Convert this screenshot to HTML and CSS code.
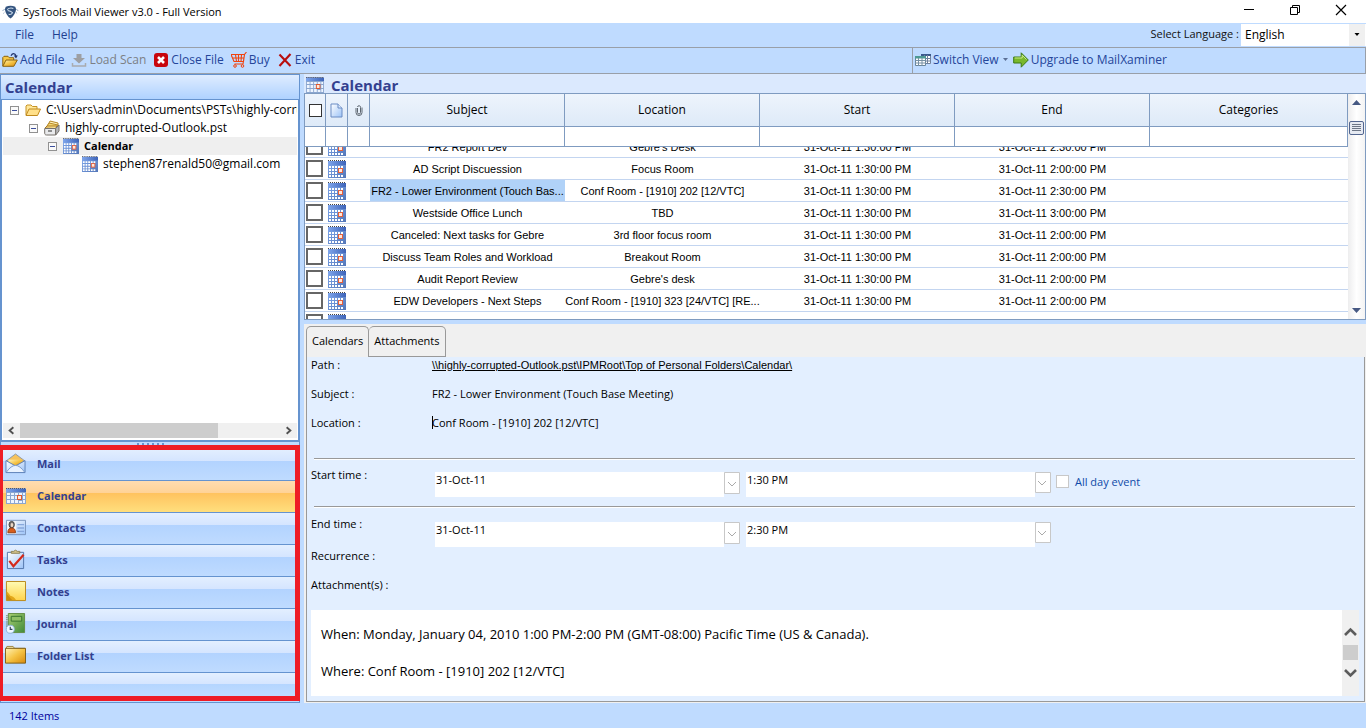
FILE: index.html
```html
<!DOCTYPE html>
<html lang="en">
<head>
<meta charset="utf-8">
<title>SysTools Mail Viewer v3.0 - Full Version</title>
<link rel="stylesheet" href="styles.css">
</head>
<body>
<svg class="sprite" aria-hidden="true">
  <defs>
    <linearGradient id="g-sky" x1="0" y1="0" x2="1" y2="1"><stop offset="0" stop-color="#fff"/><stop offset="1" stop-color="#9cc3f7"/></linearGradient>
    <linearGradient id="g-cal" x1="0" y1="0" x2="1" y2="0"><stop offset="0" stop-color="#7fa6ec"/><stop offset="1" stop-color="#3d63b8"/></linearGradient>
    <linearGradient id="g-calbody" x1="0" y1="0" x2="1" y2="1"><stop offset="0" stop-color="#7fa8ee"/><stop offset="1" stop-color="#5477b8"/></linearGradient>
    <linearGradient id="g-gold" x1="0" y1="0" x2="1" y2="1"><stop offset="0" stop-color="#fff3b8"/><stop offset=".5" stop-color="#f5c344"/><stop offset="1" stop-color="#d98a0c"/></linearGradient>
    <linearGradient id="g-note" x1="0" y1="0" x2="0" y2="1"><stop offset="0" stop-color="#fffbb4"/><stop offset="1" stop-color="#ffd34a"/></linearGradient>
    <linearGradient id="g-green" x1="0" y1="0" x2="1" y2="1"><stop offset="0" stop-color="#a9cf72"/><stop offset="1" stop-color="#3f8a3a"/></linearGradient>
  </defs>
  <symbol id="i-cal" viewBox="0 0 18 18" preserveAspectRatio="none">
    <rect x="0" y="1" width="18" height="17" fill="url(#g-calbody)"/>
    <rect x="0" y="1" width="18" height="4" fill="url(#g-cal)"/>
    <path d="M0 .5h18" stroke="#444" stroke-dasharray="1 1"/>
    <path d="M1 6h2v2H1zM4 6h2v2H4zM7 6h2v2H7zM10 6h2v2h-2zM13 6h2v2h-2zM1 9h2v2H1zM4 9h2v2H4zM7 9h2v2H7zM1 12h2v2H1zM4 12h2v2H4zM7 12h2v2H7zM1 15h2v2H1zM4 15h2v2H4zM7 15h2v2H7zM10 15h2v2h-2zM13 15h2v2h-2z" fill="#fff"/>
    <rect x="10.500" y="8.500" width="4" height="4" fill="#ffe9dc" stroke="#e8603a"/>
  </symbol>
  <symbol id="i-callight" viewBox="0 0 20 16" preserveAspectRatio="none">
    <rect x="0" y="0" width="20" height="16" fill="#8ba6cf"/>
    <rect x="0" y="1" width="20" height="3" fill="url(#g-cal)"/>
    <path d="M0 .5h20" stroke="#556" stroke-dasharray="1 1"/>
    <path d="M1 5h3v2H1zM5 5h3v2H5zM9 5h3v2H9zM13 5h3v2h-3zM17 5h2v2h-2zM1 8h3v3H1zM5 8h3v3H5zM9 8h2v3H9zM17 8h2v3h-2zM1 12h3v3H1zM5 12h3v3H5zM9 12h3v3H9zM13 13h3v2h-3zM17 12h2v3h-2z" fill="#eef5ff"/>
    <rect x="11.500" y="7.500" width="4" height="4" fill="#ffe9dc" stroke="#e0592f"/>
  </symbol>
  <symbol id="i-folder" viewBox="0 0 16 16">
    <path d="M1 13V4l1-1h4l1.500 1.500H12V7" fill="#ffe79a" stroke="#c79325"/>
    <path d="M1 13.500L4 7h11.500l-3 6.500z" fill="#ffe08a" stroke="#c08a1e"/>
  </symbol>
  <symbol id="i-addfile" viewBox="0 0 16 16">
    <path d="M.8 14V5.500L2 4.300h4l1.200 1.400h4.500V8" fill="#f6c948" stroke="#8a6210"/>
    <path d="M.8 14.300L4 8h11.300l-3.500 6.300z" fill="url(#g-gold)" stroke="#8a6210"/>
    <path d="M9 3.800C10.500 1 13 1 14 4" fill="none" stroke="#23366e" stroke-width="1.300"/><path d="M11.800 3.500h4L14 6.500z" fill="#23366e"/>
  </symbol>
  <symbol id="i-pst" viewBox="0 0 16 16">
    <path d="M4 5l2-4 8 2v6l-2 4" fill="#fff3bb" stroke="#b5872a"/>
    <path d="M3 6l2-3 9 2-2 4" fill="#f7d873" stroke="#b5872a"/>
    <path d="M1 8l2-2h10l-1.500 2.500z" fill="#ffe79a" stroke="#a8781d"/>
    <path d="M.7 8.500h11V15H2.500C1 15 .7 14 .7 13z" fill="#e9eaec" stroke="#75706a"/><path d="M11.700 8.500L15 5v6l-3.300 4z" fill="#b4b5b8" stroke="#75706a"/>
    <path d="M4 11h4" stroke="#666" stroke-width="1.400"/>
  </symbol>
  <symbol id="i-box" viewBox="0 0 9 9"><rect x=".5" y=".5" width="8" height="8" fill="#fafafa" stroke="#919191"/><path d="M2 4.500h5" stroke="#3c4f9c"/></symbol>
</svg>

<header class="titlebar">
  <svg class="logo" viewBox="0 0 18 16" aria-hidden="true">
    <path d="M4 2.500Q9 .5 14 2.500L15 5q-1 6-6 10Q4 11 3 5z" fill="#34547f"/>
    <path d="M5.500 5.500Q8 3 12 4.200M6 6.500q3 .5 5.500 2.500M7 10.500q3 .5 4-1.500" fill="none" stroke="#cfdeee" stroke-width="1.100"/>
    <path d="M2.500 5L.5 7M2.500 8.500l-1 1M15.500 5l1.700 2M15 8.500l1 1" stroke="#8aa3bf"/>
  </svg>
  <h1 class="titlebar-text">SysTools Mail Viewer v3.0 - Full Version</h1>
  <div class="window-buttons">
    <button type="button" aria-label="Minimize"><svg width="12" height="12" viewBox="0 0 12 12"><path d="M1 5.500h10" stroke="#000"/></svg></button>
    <button type="button" aria-label="Restore"><svg width="12" height="12" viewBox="0 0 12 12"><path d="M1.500 3.500h7v7h-7zM3.500 3V1.500h7v7H9" fill="none" stroke="#000"/></svg></button>
    <button type="button" aria-label="Close"><svg width="12" height="12" viewBox="0 0 12 12"><path d="M1 1l10 10M11 1L1 11" stroke="#000" stroke-width="1.200"/></svg></button>
  </div>
</header>

<nav class="menubar">
  <button type="button">File</button>
  <button type="button">Help</button>
  <label class="language-label" for="language">Select Language :</label>
  <div class="language">
    <select id="language"><option>English</option></select>
    <svg class="language-arrow" viewBox="0 0 16 22" aria-hidden="true"><rect width="16" height="22" fill="#f0f0f0"/><path d="M5.500 9h5L8 12z" fill="#000"/></svg>
  </div>
</nav>

<div class="toolbar">
  <div class="toolbar-main">
    <button type="button"><svg class="icon16" aria-hidden="true"><use href="#i-addfile"/></svg>Add File</button>
    <button type="button" disabled><svg class="icon16" viewBox="0 0 16 16" aria-hidden="true"><path d="M5.500 2h5v4H14l-6 5.500L2 6h3.500z" fill="#9d9fa3"/><path d="M1.500 11v3h13v-3" fill="none" stroke="#a9abaf" stroke-width="1.500"/></svg>Load Scan</button>
    <button type="button"><svg class="icon16" viewBox="0 0 16 16" aria-hidden="true"><rect x="1" y="1" width="14" height="14" rx="3" fill="#c8060e"/><path d="M5 5l6 6M11 5l-6 6" stroke="#fff" stroke-width="2.600"/></svg>Close File</button>
    <button type="button"><svg class="icon16" viewBox="0 0 16 16" aria-hidden="true"><path d="M0 2.500h13.500L12.500 9.500H3zM15.500 0l-2 2.500L12 12H3.500M1.500 6h12M4.500 2.500l1 7M7.500 2.500v7M10.500 2.500l-.5 7" fill="none" stroke="#f0420d" stroke-width="1.100"/><circle cx="4" cy="14" r="1.300" fill="none" stroke="#f0420d"/><circle cx="11.500" cy="14" r="1.300" fill="none" stroke="#f0420d"/></svg>Buy</button>
    <button type="button"><svg class="icon16" viewBox="0 0 16 16" aria-hidden="true"><path d="M2.500 2.500L13.500 14M13.500 2L2.500 14" stroke="#b80d0d" stroke-width="2.100"/></svg>Exit</button>
  </div>
  <div class="toolbar-side">
    <button type="button" class="split"><svg class="icon16" viewBox="0 0 16 16" aria-hidden="true"><path d="M6.500 2.500h9v9h-9z" fill="#fff" stroke="#6f819c"/><path d="M6 2h10v2H6z" fill="#3c5a8c"/><path d="M6 6.500h10M6 9h10M9.500 3v9M12.500 3v9" stroke="#6f819c"/><path d="M.5 4.500h10v9H.5z" fill="#fff" stroke="#66849b"/><path d="M0 4h11v2.500H0z" fill="#4f9a94"/><path d="M0 8.500h11M0 11h11M3.500 6v8M7 6v8" stroke="#7690a4"/></svg>Switch View<svg class="split-arrow" viewBox="0 0 5 3" aria-hidden="true"><path d="M0 0h5L2.500 3z" fill="#5a6f95"/></svg></button>
    <button type="button"><svg class="icon16" viewBox="0 0 16 16" aria-hidden="true"><path d="M.7 5h7.500V.8L15.300 8l-7.100 7.200V11H.7z" fill="#79b82c" stroke="#3a7a16"/><path d="M1.700 6h7.500V3.200L13.500 7.500" fill="none" stroke="#c8ea86"/></svg>Upgrade to MailXaminer</button>
  </div>
</div>

<main class="workspace">
  <aside class="sidebar">
    <h2 class="sidebar-title">Calendar</h2>
    <div class="tree-box">
      <ul class="tree">
        <li><div class="node"><svg class="expander"><use href="#i-box"/></svg><svg class="icon16"><use href="#i-folder"/></svg><span>C:\Users\admin\Documents\PSTs\highly-corrup</span></div>
          <ul>
            <li><div class="node"><svg class="expander"><use href="#i-box"/></svg><svg class="icon16"><use href="#i-pst"/></svg><span>highly-corrupted-Outlook.pst</span></div>
              <ul>
                <li><div class="node node-active"><svg class="expander"><use href="#i-box"/></svg><svg class="icon16"><use href="#i-cal"/></svg><span>Calendar</span></div>
                  <ul>
                    <li><div class="node"><svg class="expander"></svg><svg class="icon16"><use href="#i-cal"/></svg><span>stephen87renald50@gmail.com</span></div></li>
                  </ul>
                </li>
              </ul>
            </li>
          </ul>
        </li>
      </ul>
      <div class="hscroll">
        <svg viewBox="0 0 17 16"><path d="M10.500 4.500L6.500 8l4 3.500" fill="none" stroke="#505050" stroke-width="2"/></svg>
        <div class="hscroll-track"><div class="hscroll-thumb"></div></div>
        <svg viewBox="0 0 17 16"><path d="M6.500 4.500l4 3.500-4 3.500" fill="none" stroke="#505050" stroke-width="2"/></svg>
      </div>
    </div>
    <div class="splitter"><span></span><span></span><span></span><span></span><span></span><span></span></div>
    <nav class="modules">
      <button type="button"><svg viewBox="0 0 22 22"><path d="M1 8.500L11 1l10 7.500z" fill="#f6c25c" stroke="#8b98ab"/><path d="M3.500 7h15v7h-15z" fill="url(#g-gold)"/><path d="M1 8l10 5.500L21 8v12.500H1z" fill="url(#g-sky)" stroke="#5d80b6"/><path d="M1.500 20q5-7 9.500-7t9.500 7" fill="#e8f2ff" stroke="#7d9ccc"/></svg>Mail</button>
      <button type="button" class="selected"><svg viewBox="0 0 21 21"><use href="#i-callight" x="1" y="3" width="20" height="16"/></svg>Calendar</button>
      <button type="button"><svg viewBox="0 0 22 22"><path d="M1.500 3.500h20v15h-20z" fill="url(#g-sky)" stroke="#7b95bd"/><path d="M2.500 4.500h9v13h-9z" fill="#f3f5f8"/><ellipse cx="7" cy="8" rx="2.800" ry="3.400" fill="#77706d" stroke="#444"/><ellipse cx="7.300" cy="8.500" rx="1.400" ry="2.200" fill="#ead7c5"/><path d="M3 16.500q0-5 4-5t4 5z" fill="#d85e1d" stroke="#923a0e"/><path d="M13 8h7M13 11.500h7M13 15h7" stroke="#88a8dc" stroke-width="1.400"/></svg>Contacts</button>
      <button type="button"><svg viewBox="0 0 22 22"><path d="M2.500 3.500h17v17h-17z" fill="url(#g-sky)" stroke="#5274a8"/><path d="M6.500 4.500V2.500h2.500q2-2.500 4 0h2.500v2z" fill="#d3c48d" stroke="#8c8053"/><path d="M4.500 12.500l4.300 5.500L19.500 6" fill="none" stroke="#d42a1b" stroke-width="2.300"/></svg>Tasks</button>
      <button type="button"><svg viewBox="0 0 22 22"><path d="M1.500 .5h20v20h-20z" fill="url(#g-note)" stroke="#b98716"/><path d="M2 11q3 3 3.500 4.500Q9 16 11.500 20H2z" fill="#e3a719"/><path d="M2 14l5.500 6H2z" fill="#c88b10"/></svg>Notes</button>
      <button type="button"><svg viewBox="0 0 22 22"><path d="M3.500 .5h17v20h-17z" fill="url(#g-green)" stroke="#628c42"/><path d="M2 2v15" stroke="#778f76" stroke-width="2" stroke-dasharray="1 1"/><path d="M6.500 3.500h11v5h-11z" fill="#8fbf66" stroke="#37722f"/><circle cx="5.500" cy="17" r="4.200" fill="#eef6ff" stroke="#8db4da"/><path d="M5.500 14.500v2.700h2.300" fill="none" stroke="#345" stroke-width="1.200"/></svg>Journal</button>
      <button type="button"><svg viewBox="0 0 22 22"><path d="M1 4l1-2.500h6.500L10 3.500h11V5" fill="#f7eaae" stroke="#9a8342"/><path d="M.5 3.500h21v15.500H.5z" fill="url(#g-gold)" stroke="#7e5c14"/></svg>Folder List</button>
      <div class="modules-rest"></div>
    </nav>
  </aside>

  <section class="content">
    <h2 class="content-title"><svg viewBox="0 0 18 16"><use href="#i-callight"/></svg>Calendar</h2>
    <div class="grid">
      <div class="grid-tables">
        <table class="grid-head">
          <colgroup><col class="c-check-head"><col class="c-icon"><col class="c-icon"><col class="c-text"><col class="c-text"><col class="c-text"><col class="c-text"><col></colgroup>
          <thead>
            <tr>
              <th><input type="checkbox" aria-label="Select all"></th>
              <th><svg width="13" height="15" viewBox="0 0 13 15"><path d="M1 1h7l4 4v9H1z" fill="url(#g-sky)" stroke="#6b8cc4"/><path d="M8 1v4h4" fill="#dbe8fb" stroke="#6b8cc4"/></svg></th>
              <th><svg width="8" height="11" viewBox="0 0 8 11"><path d="M2.500 3v4.500a1.500 1.500 0 003 0V2.500a1.500 1.500 0 00-3-.5M1 3v4.500a3 3 0 006 0V2.500" fill="none" stroke="#5d6670"/></svg></th>
              <th>Subject</th><th>Location</th><th>Start</th><th>End</th><th>Categories</th>
            </tr>
            <tr class="filters"><td></td><td></td><td></td>
              <td><input type="text" aria-label="Filter subject"></td><td><input type="text" aria-label="Filter location"></td><td><input type="text" aria-label="Filter start"></td><td><input type="text" aria-label="Filter end"></td><td><input type="text" aria-label="Filter categories"></td></tr>
          </thead>
        </table>
        <div class="grid-body" id="grid-body">
          <table>
            <colgroup><col class="c-check"><col class="c-icon"><col class="c-icon"><col class="c-text"><col class="c-text"><col class="c-text"><col class="c-text"><col></colgroup>
            <tbody>
              <tr><td><input type="checkbox" aria-label="Select row"></td><td><svg class="row-icon"><use href="#i-cal"/></svg></td><td></td><td>FR2 Report Dev</td><td>Gebre's Desk</td><td>31-Oct-11 1:30:00 PM</td><td>31-Oct-11 2:30:00 PM</td><td></td></tr>
              <tr><td><input type="checkbox" aria-label="Select row"></td><td><svg class="row-icon"><use href="#i-cal"/></svg></td><td></td><td>AD Script Discuession</td><td>Focus Room</td><td>31-Oct-11 1:30:00 PM</td><td>31-Oct-11 2:00:00 PM</td><td></td></tr>
              <tr><td><input type="checkbox" aria-label="Select row"></td><td><svg class="row-icon"><use href="#i-cal"/></svg></td><td></td><td class="current">FR2 - Lower Environment (Touch Bas...</td><td>Conf Room - [1910] 202 [12/VTC]</td><td>31-Oct-11 1:30:00 PM</td><td>31-Oct-11 2:30:00 PM</td><td></td></tr>
              <tr><td><input type="checkbox" aria-label="Select row"></td><td><svg class="row-icon"><use href="#i-cal"/></svg></td><td></td><td>Westside Office Lunch</td><td>TBD</td><td>31-Oct-11 1:30:00 PM</td><td>31-Oct-11 3:00:00 PM</td><td></td></tr>
              <tr><td><input type="checkbox" aria-label="Select row"></td><td><svg class="row-icon"><use href="#i-cal"/></svg></td><td></td><td>Canceled: Next tasks for Gebre</td><td>3rd floor focus room</td><td>31-Oct-11 1:30:00 PM</td><td>31-Oct-11 2:00:00 PM</td><td></td></tr>
              <tr><td><input type="checkbox" aria-label="Select row"></td><td><svg class="row-icon"><use href="#i-cal"/></svg></td><td></td><td>Discuss Team Roles and Workload</td><td>Breakout Room</td><td>31-Oct-11 1:30:00 PM</td><td>31-Oct-11 2:00:00 PM</td><td></td></tr>
              <tr><td><input type="checkbox" aria-label="Select row"></td><td><svg class="row-icon"><use href="#i-cal"/></svg></td><td></td><td>Audit Report Review</td><td>Gebre's desk</td><td>31-Oct-11 1:30:00 PM</td><td>31-Oct-11 2:00:00 PM</td><td></td></tr>
              <tr><td><input type="checkbox" aria-label="Select row"></td><td><svg class="row-icon"><use href="#i-cal"/></svg></td><td></td><td>EDW Developers - Next Steps</td><td>Conf Room - [1910] 323 [24/VTC] [RE...</td><td>31-Oct-11 1:30:00 PM</td><td>31-Oct-11 2:00:00 PM</td><td></td></tr>
              <tr><td><input type="checkbox" aria-label="Select row"></td><td><svg class="row-icon"><use href="#i-cal"/></svg></td><td></td><td>Canceled: FR2 Developer - Check</td><td>Conf Room - [1910] 202 [12/VTC]</td><td>31-Oct-11 1:30:00 PM</td><td>31-Oct-11 2:30:00 PM</td><td></td></tr>
            </tbody>
          </table>
        </div>
      </div>
      <div class="grid-scroll">
        <svg width="9" height="5" viewBox="0 0 9 5"><path d="M0 5h9L4.500 0z" fill="#475983"/></svg>
        <svg class="grid-thumb" width="15" height="14" viewBox="0 0 15 14"><rect x=".5" y=".5" width="14" height="13" rx="1.500" fill="#e6eaf2" stroke="#53668f"/><path d="M3 3.500h9M3 5.500h9M3 7.500h9M3 9.500h9" stroke="#6d7686"/></svg>
        <svg class="grid-down" width="9" height="5" viewBox="0 0 9 5"><path d="M0 0h9L4.500 5z" fill="#475983"/></svg>
      </div>
    </div>

    <div class="details">
      <div class="tabs" role="tablist">
        <button type="button" role="tab" aria-selected="true">Calendars</button>
        <button type="button" role="tab" aria-selected="false">Attachments</button>
      </div>
      <div class="panel" role="tabpanel">
        <dl class="facts">
          <dt>Path :</dt><dd><a href="#path">\\highly-corrupted-Outlook.pst\IPMRoot\Top of Personal Folders\Calendar\</a></dd>
          <dt>Subject :</dt><dd>FR2 - Lower Environment (Touch Base Meeting)</dd>
          <dt>Location :</dt><dd class="caret">Conf Room - [1910] 202 [12/VTC]</dd>
        </dl>
        <div class="when when-start">
          <label for="start-date">Start time :</label>
          <div class="combo"><select id="start-date"><option>31-Oct-11</option></select><svg viewBox="0 0 16 22"><path d="M.5.5h15v21H.5z" fill="#fff" stroke="#c8c8c8"/><path d="M4 10l4 4 4-4" fill="none" stroke="#aaa"/></svg></div>
          <div class="combo"><select aria-label="Start hour"><option>1:30 PM</option></select><svg viewBox="0 0 16 22"><path d="M.5.500h15v20H.5z" fill="#fff" stroke="#c8c8c8"/><path d="M3 9l4 4 4-4" fill="none" stroke="#aaa"/></svg></div>
          <label class="allday"><input type="checkbox">All day event</label>
        </div>
        <div class="when when-end">
          <label for="end-date">End time :</label>
          <div class="combo"><select id="end-date"><option>31-Oct-11</option></select><svg viewBox="0 0 16 22"><path d="M.5.500h15v21H.5z" fill="#fff" stroke="#c8c8c8"/><path d="M4 10l4 4 4-4" fill="none" stroke="#aaa"/></svg></div>
          <div class="combo"><select aria-label="End hour"><option>2:30 PM</option></select><svg viewBox="0 0 16 22"><path d="M.5.500h15v20H.5z" fill="#fff" stroke="#c8c8c8"/><path d="M3 9l4 4 4-4" fill="none" stroke="#aaa"/></svg></div>
        </div>
        <div class="extras">
          <p>Recurrence :</p>
          <p>Attachment(s) :</p>
        </div>
        <div class="message">
          <div class="message-text">
            <p>When: Monday, January 04, 2010 1:00 PM-2:00 PM (GMT-08:00) Pacific Time (US &amp; Canada).</p>
            <p>Where: Conf Room - [1910] 202 [12/VTC]</p>
          </div>
          <div class="message-scroll">
            <svg width="13" height="10" viewBox="0 0 13 10"><path d="M1 8l5.500-5.500L12 8" fill="none" stroke="#5c5c5c" stroke-width="2.600"/></svg>
            <div class="message-thumb"></div>
            <svg width="13" height="10" viewBox="0 0 13 10"><path d="M1 2l5.500 5.500L12 2" fill="none" stroke="#5c5c5c" stroke-width="2.600"/></svg>
          </div>
        </div>
      </div>
    </div>
  </section>
</main>

<footer class="statusbar">142 Items</footer>
<script src="script.js"></script>
</body>
</html>
```
FILE: styles.css
```css
* { box-sizing: border-box; }
html, body { height: 100%; }
body {
  margin: 0;
  display: flex;
  flex-direction: column;
  overflow: hidden;
  background: #bfdbff;
  color: #000;
  font: 12px/16px "Open Sans", "Noto Sans", sans-serif;
}
button, input, select { font: inherit; color: inherit; }
button { border: 0; background: none; padding: 0; }
h1, h2, p, dl, dd, ul { margin: 0; padding: 0; }
ul { list-style: none; }
svg { display: block; flex: none; }
.sprite { position: absolute; width: 0; height: 0; }
.icon16 { width: 16px; height: 16px; }

input[type="checkbox"] {
  appearance: none;
  display: block;
  margin: 0;
  width: 13px;
  height: 13px;
  background: #fff;
  border: 1px solid #333;
}

/* Title bar */
.titlebar { display: flex; align-items: center; height: 23px; flex: none; padding-left: 2px; background: #fff; }
.logo { width: 17px; height: 16px; }
.titlebar-text { margin-left: 4px; font-size: 11px; font-weight: 400; }
.window-buttons { display: flex; margin-left: auto; }
.window-buttons button { display: flex; justify-content: center; width: 46px; padding: 0 4px 3px 0; }

/* Menu bar */
.menubar { display: flex; align-items: center; height: 24px; flex: none; padding-left: 15px; gap: 18px; color: #1f3f8f; }
.language-label { margin-left: auto; font-size: 11px; color: #111; padding-bottom: 2px; }
.language { display: grid; grid-template-columns: 1fr 16px 1px; width: 125px; margin-left: -16px; height: 22px; background: #fff; }
.language select { grid-area: 1 / 1 / 2 / 4; appearance: none; border: 0; background: transparent; padding: 0 4px; color: #000; }
.language-arrow { grid-area: 1 / 2; width: 16px; height: 22px; pointer-events: none; }

/* Toolbar */
.toolbar { display: flex; height: 27px; flex: none; color: #24459a; border: 1px solid #999fa8; border-left-width: 0; }
.toolbar-main, .toolbar-side { display: flex; align-items: center; gap: 7px; padding: 0 0 2px 2px; }
.toolbar-main { flex: 1; }
.toolbar-side { width: 453px; gap: 5px; border-left: 1px solid #999fa8; }
.toolbar button { display: flex; align-items: center; gap: 2px; }
.toolbar button:disabled { color: #7c7f85; }
.split-arrow { width: 5px; height: 3px; margin-left: 2px; }

/* Workspace */
.workspace { display: flex; flex: 1; min-height: 0; gap: 4px; }
.sidebar { display: flex; flex-direction: column; width: 300px; flex: none; border: 1px solid #6593cf; border-top: 0; }
.sidebar-title {
  flex: none;
  height: 25px;
  padding-left: 4px;
  font-size: 15px;
  line-height: 24px;
  color: #33408f;
  background: linear-gradient(#dfecff, #afd2ff);
  border-top: 1px solid #6593cf;
}
.tree-box { display: flex; flex-direction: column; flex: 1; min-height: 0; background: #fff; border: 1px solid #6593cf; border-width: 1px 1px 2px; padding: 1px 1px 2px; }
.tree { flex: 1; overflow: hidden; font-size: 12px; }
.tree ul .node { padding-left: 26px; }
.tree ul ul .node { padding-left: 45px; }
.tree ul ul ul .node { padding-left: 64px; }
.node { display: flex; align-items: center; height: 18px; padding-left: 7px; white-space: nowrap; }
.node .icon16 { margin: 0 5px 0 6px; }
.node-active { background: #efefef; font-size: 11px; font-weight: 700; }
.expander { width: 9px; height: 9px; }
.hscroll { display: flex; flex: none; height: 15px; background: #f0f0f0; }
.hscroll svg { width: 17px; height: 15px; }
.hscroll-track { flex: 1; }
.hscroll-thumb { width: 76%; height: 100%; background: #cdcdcd; }
.splitter { display: flex; flex: none; justify-content: center; align-items: center; gap: 3px; height: 3px; }
.splitter span { width: 2px; height: 2px; background: #6593cf; }

.modules { position: relative; display: flex; flex-direction: column; flex: none; height: 257px; margin: 0 -1px; padding: 4px 5px 6px 3px; }
.modules::after { content: ""; position: absolute; inset: 0 0 1px; border: 5px solid #ee1c25; border-left-width: 3px; pointer-events: none; }
.modules button {
  display: flex;
  align-items: center;
  gap: 11px;
  height: 32px;
  flex: none;
  padding: 0 0 2px 2px;
  font-size: 11px;
  font-weight: 700;
  color: #33408f;
  background: linear-gradient(#e3efff, #d5e5ff 38%, #b2d3ff 38%, #bfdbff);
  border-bottom: 1px solid #6593cf;
}
.modules button svg { width: 21px; height: 21px; }
.modules .selected { background: linear-gradient(#ffdcb0, #ffd295 40%, #ffc35f 40%, #ffdf7d); }
.modules-rest { flex: 1; background: linear-gradient(#e3efff, #d5e5ff 48%, #b4d5ff 48%, #bfdbff); }

/* Content */
.content { display: flex; flex-direction: column; flex: 1; min-width: 0; }
.content-title { display: flex; align-items: center; gap: 7px; height: 19px; flex: none; padding: 3px 0 0 2px; font-size: 15px; line-height: 16px; color: #33408f; background: #dbe9fe; }
.content-title svg { width: 18px; height: 16px; }
.grid { display: flex; flex: none; height: 227px; background: #fff; border: 1px solid #7f9bc0; border-width: 1px 1px 1px 0; }
.grid-tables { display: flex; flex-direction: column; flex: 1; min-width: 0; }
.grid table { width: 100%; table-layout: fixed; border-collapse: separate; border-spacing: 0; }
.c-check-head { width: 22px; }
.c-check { width: 21px; }
.c-icon { width: 22px; }
.c-text { width: 195px; }
.grid th, .grid td { padding: 0; text-align: center; overflow: hidden; white-space: nowrap; }
.grid th { height: 33px; font-weight: 400; background: linear-gradient(#eef4fc, #deeaf8); }
.grid-head th, .grid-head td { border: solid #7f9bc0; border-width: 0 1px 1px 0; }
.grid-head th:first-child, .grid-head td:first-child { border-left-width: 1px; }
.filters td { height: 20px; }
.filters input { display: block; width: 100%; height: 19px; border: 0; padding: 0 3px; background: transparent; }
.grid th svg, .grid th input { margin: 0 auto; }
.grid-body { flex: 1; overflow: hidden; border-left: 1px solid #7f9bc0; font: 11px/14px "Liberation Sans", Arial, sans-serif; }
.grid-body td { height: 22px; border-bottom: 1px solid #c3d5f0; }
.grid-body input { width: 17px; height: 17px; border: 2px solid #666; margin-left: 1px; }
.row-icon { width: 18px; height: 18px; margin-left: 2px; }
.current { background: #b0d2f8; }
.grid-scroll { display: flex; flex-direction: column; align-items: center; width: 17px; flex: none; padding: 6px 0; background: linear-gradient(90deg, #ededee, #fff 50%, #f3f3f3); }
.grid-thumb { margin-top: 16px; }
.grid-down { margin-top: auto; }

/* Details */
.details { display: flex; flex-direction: column; flex: 1; min-height: 0; margin-top: 4px; padding: 2px 1px 1px 2px; background: #f0f0f0; font-size: 11px; }
.tabs { display: flex; flex: none; height: 31px; font-size: 11px; }
.tabs button { padding: 0 5px 2px; border: 1px solid #999; border-bottom: 0; border-radius: 5px 5px 0 0; }
.tabs button + button { border-left: 0; border-bottom: 1px solid #999; border-bottom-left-radius: 0; }
.panel { display: flex; flex-direction: column; flex: 1; min-height: 0; padding: 0 5px 5px 4px; background: #e3efff; border: solid #999; border-width: 0 1px 1px; }
.facts { display: grid; grid-template-columns: 121px 1fr; grid-auto-rows: 29px; height: 101px; line-height: 16px; flex: none; }
.facts dt, .facts dd { margin: 0; }
.facts a { color: #000; font: 11px/16px "Liberation Sans", Arial, sans-serif; }
.caret::before { content: ""; display: inline-block; width: 1px; height: 13px; margin-right: -1px; background: #000; vertical-align: -2px; }
.when { display: grid; grid-template-columns: 115px minmax(0, 305px) minmax(0, 305px) auto; justify-content: start; column-gap: 6px; flex: none; margin: 0 4px 0 3px; border-top: 1px solid #999; box-shadow: inset 0 1px #fff; }
.when > label:first-child { margin: 0 3px 0 -3px; padding-top: 8px; }
.when-start { height: 48px; }
.when-end { height: 39px; }
.when-end > label:first-child { padding-top: 9px; }
.combo { display: grid; grid-template-columns: 1fr 16px; height: 23px; margin-top: 13px; }
.when-end .combo { margin-top: 15px; }
.combo select { grid-area: 1 / 1; appearance: none; border: 0; border-radius: 0; background: #fff; padding: 0 1px 9px; }
.combo svg { width: 16px; height: 22px; }
.allday { display: flex; align-items: center; gap: 6px; height: 23px; margin: 11px 0 0 -1px; color: #0f4aa8; }
.allday input { border-color: #c8c8c8; }
.extras { display: flex; flex-direction: column; gap: 13px; flex: none; height: 65px; padding-top: 3px; }
.message { display: flex; flex: 1; min-height: 0; background: #fff; }
.message-text { flex: 1; padding: 14px 10px; font: 13px/20px "Open Sans", sans-serif; }
.message-text p + p { margin-top: 17px; }
.message-scroll { display: flex; flex-direction: column; align-items: center; gap: 8px; width: 17px; padding-top: 17px; background: #f0f0f0; }
.message-thumb { width: 15px; height: 15px; background: #cdcdcd; }

.statusbar { flex: none; height: 25px; padding-left: 9px; font-size: 11px; line-height: 26px; color: #00009c; }
```
FILE: script.js
```javascript
document.getElementById("grid-body").scrollTop = 11;
```
